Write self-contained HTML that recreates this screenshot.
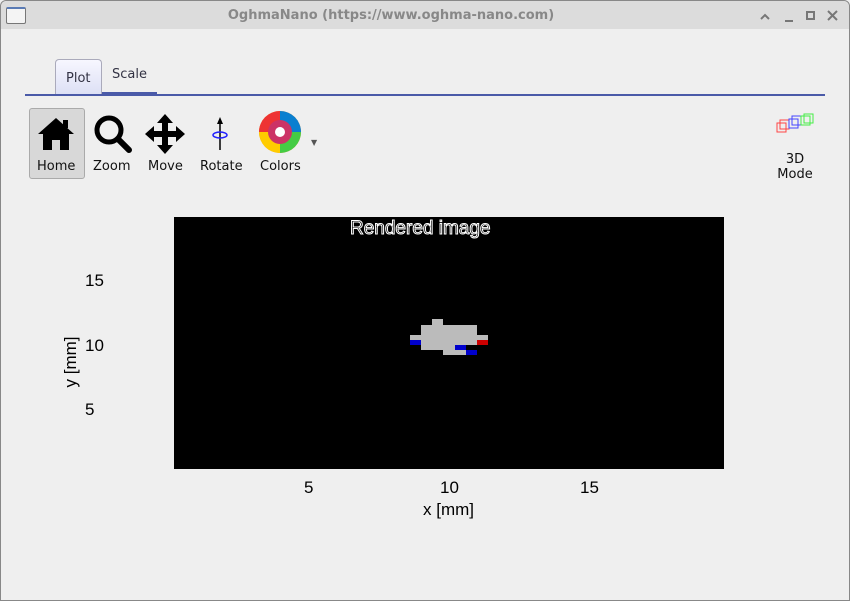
<html><body style="margin:0;width:850px;height:601px;background:#efefef;font-family:'DejaVu Sans',sans-serif;position:relative;overflow:hidden">
<div style="position:absolute;left:0;top:0;width:848px;height:599px;border:1px solid #888;border-radius:6px 6px 0 0"></div>
<div style="position:absolute;left:1px;top:1px;width:848px;height:28px;background:#dcdcdc;border-radius:6px 6px 0 0"></div>
<div style="position:absolute;left:6px;top:7px;width:18px;height:14px;border:1px solid #777;background:#f4f4f4;border-top:2px solid #5a7bb5;border-radius:2px"></div>
<div style="position:absolute;left:0;width:782px;top:8px;text-align:center;font-size:13px;font-weight:bold;color:#888">OghmaNano (https://www.oghma-nano.com)</div>
<svg style="position:absolute;left:758px;top:8px" width="80" height="16"><g stroke="#777" stroke-width="2" fill="none"><path d="M3 11 L7 7 L11 11"/><path d="M27 13 L35 13"/><rect x="49" y="4" width="7" height="7"/><path d="M70 3 L79 12 M79 3 L70 12"/></g></svg>
<div style="position:absolute;left:55px;top:59px;width:45px;height:34px;border:1px solid #aab;border-bottom:none;border-radius:4px 4px 0 0;background:linear-gradient(#f7f7ff,#dde0f5)"></div>
<div style="position:absolute;left:66px;top:71px;font-size:13px;color:#334">Plot</div>
<div style="position:absolute;left:112px;top:67px;font-size:13px;color:#334">Scale</div>
<div style="position:absolute;left:102px;top:92px;width:55px;height:2px;background:#4a5aa8"></div>
<div style="position:absolute;left:25px;top:94px;width:800px;height:2px;background:#4a5aa8"></div>
<div style="position:absolute;left:29px;top:108px;width:54px;height:69px;background:#d8d8d8;border:1px solid #aaa;border-radius:3px"></div>
<svg style="position:absolute;left:36px;top:114px" width="40" height="40" viewBox="0 0 40 40"><path d="M2 20 L20 4 L38 20 L33 20 L33 36 L24 36 L24 26 L16 26 L16 36 L7 36 L7 20 Z" fill="#000"/><rect x="27" y="6" width="5" height="8"/></svg>
<svg style="position:absolute;left:93px;top:114px" width="40" height="40"><circle cx="16" cy="16" r="12" fill="none" stroke="#000" stroke-width="5"/><path d="M25 25 L36 36" stroke="#000" stroke-width="6" stroke-linecap="round"/></svg>
<svg style="position:absolute;left:145px;top:114px" width="40" height="40"><path d="M20 0 L28 9 L23 9 L23 17 L31 17 L31 12 L40 20 L31 28 L31 23 L23 23 L23 31 L28 31 L20 40 L12 31 L17 31 L17 23 L9 23 L9 28 L0 20 L9 12 L9 17 L17 17 L17 9 L12 9 Z"/></svg>
<svg style="position:absolute;left:205px;top:114px" width="30" height="40"><path d="M15 36 L15 6" stroke="#000" stroke-width="1.5"/><path d="M12 10 L15 3 L18 10Z"/><ellipse cx="15" cy="21" rx="7" ry="3" fill="none" stroke="#22f" stroke-width="1.5"/></svg>
<svg style="position:absolute;left:259px;top:111px" width="42" height="42" viewBox="-21 -21 42 42"><circle r="21" fill="#f80"/><path d="M0 0 L0 -21 A21 21 0 0 1 21 0Z" fill="#0a7fd0"/><path d="M0 0 L21 0 A21 21 0 0 1 0 21Z" fill="#4c4"/><path d="M0 0 L0 21 A21 21 0 0 1 -21 0Z" fill="#fc0"/><path d="M0 0 L-21 0 A21 21 0 0 1 0 -21Z" fill="#e33"/><circle r="12" fill="#c36"/><circle r="5" fill="#fff"/></svg>
<div style="position:absolute;left:311px;top:138px;font-size:8px;color:#555">▼</div>
<div style="position:absolute;top:159px;font-size:13px;color:#111">
<span style="position:absolute;left:37px">Home</span><span style="position:absolute;left:93px">Zoom</span><span style="position:absolute;left:148px">Move</span><span style="position:absolute;left:200px">Rotate</span><span style="position:absolute;left:260px">Colors</span></div>
<svg style="position:absolute;left:775px;top:113px" width="40" height="25"><g fill="none" stroke-width="1"><rect x="2" y="10" width="9" height="9" stroke="#f44"/><rect x="5" y="7" width="9" height="9" stroke="#f44"/><rect x="14" y="6" width="9" height="9" stroke="#44f"/><rect x="17" y="3" width="9" height="9" stroke="#44f"/><rect x="26" y="3" width="9" height="9" stroke="#4e4"/><rect x="29" y="1" width="9" height="9" stroke="#4e4"/></g></svg>
<div style="position:absolute;left:770px;top:152px;width:50px;text-align:center;font-size:13px;line-height:15px;color:#111">3D<br>Mode</div>
<div style="position:absolute;left:174px;top:217px;width:550px;height:252px;background:#000"></div>
<div style="position:absolute;left:350px;top:218px;font-family:'Liberation Sans';font-size:19px;color:#000;-webkit-text-stroke:1px #fff">Rendered image</div>
<div style="position:absolute;left:432px;top:319px;width:11px;height:6px;background:#bbb"></div>
<div style="position:absolute;left:421px;top:325px;width:56px;height:25px;background:#bbb"></div>
<div style="position:absolute;left:410px;top:335px;width:78px;height:5px;background:#bbb"></div>
<div style="position:absolute;left:410px;top:340px;width:11px;height:5px;background:#00c"></div>
<div style="position:absolute;left:477px;top:340px;width:11px;height:5px;background:#c00"></div>
<div style="position:absolute;left:443px;top:350px;width:23px;height:5px;background:#bbb"></div>
<div style="position:absolute;left:455px;top:345px;width:11px;height:5px;background:#00c"></div>
<div style="position:absolute;left:466px;top:345px;width:11px;height:5px;background:#000"></div>
<div style="position:absolute;left:466px;top:350px;width:11px;height:5px;background:#00c"></div>
<div style="font-family:'Liberation Sans';font-size:17px;color:#000">
<span style="position:absolute;left:85px;top:271px">15</span><span style="position:absolute;left:85px;top:336px">10</span><span style="position:absolute;left:85px;top:400px">5</span>
<span style="position:absolute;left:304px;top:478px">5</span><span style="position:absolute;left:440px;top:478px">10</span><span style="position:absolute;left:580px;top:478px">15</span>
<span style="position:absolute;left:423px;top:500px">x [mm]</span>
<span style="position:absolute;left:44px;top:352px;transform:rotate(-90deg);transform-origin:center;width:54px;text-align:center">y [mm]</span></div>
</body></html>
